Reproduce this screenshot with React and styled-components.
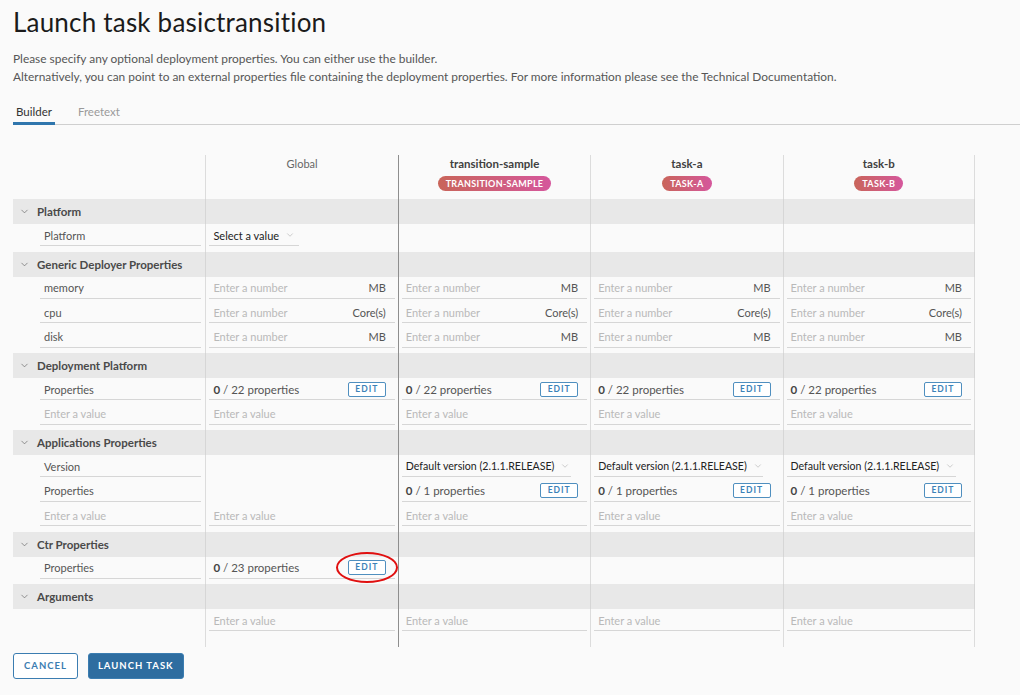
import React from "react";
import styled, { createGlobalStyle, css } from "styled-components";
import { ChevronDown } from "lucide-react";

const Global = createGlobalStyle`
  html, body { margin: 0; padding: 0; background: #fafafa; }
  body { font-family: Lato, "Open Sans", sans-serif; color: #454545; }
  * { box-sizing: border-box; }
`;

const Page = styled.div`
  padding: 6px 0 0 13px;
`;

const Title = styled.h1`
  margin: 0;
  font-size: 26px;
  line-height: 32px;
  font-weight: 400;
  color: #1b1b1b;
  letter-spacing: 0.2px;
`;

const Desc = styled.p`
  margin: 12px 0 0;
  font-size: 11.9px;
  line-height: 18px;
  color: #565656;
`;

const Tabs = styled.div`
  display: flex;
  gap: 20px;
  margin-top: 14px;
  border-bottom: 1px solid #cfcfcf;
  height: 25px;
`;

const Tab = styled.div`
  padding: 0 3px;
  font-size: 11.5px;
  color: ${(p) => (p.$active ? "#333" : "#9a9a9a")};
  border-bottom: 3px solid ${(p) => (p.$active ? "#2f76ad" : "transparent")};
  height: 25px;
  margin-bottom: -1px;
  display: flex;
  align-items: center;
`;

const Table = styled.div`
  margin-top: 30px;
  width: 962px;
`;

const Row = styled.div`
  display: grid;
  grid-template-columns: repeat(5, 1fr);
  height: ${(p) => p.$h}px;
  background: ${(p) => (p.$band ? "#e8e8e8" : "transparent")};
`;

const Cell = styled.div`
  display: flex;
  flex-direction: column;
  min-width: 0;
  border-left: 1px solid ${(p) => (p.$strong ? "#8e8e8e" : p.$band ? "#d6d6d6" : "#dcdcdc")};
  ${(p) => p.$first && css`border-left: none;`}
  &:last-child { border-right: 1px solid ${(p) => (p.$band ? "#d6d6d6" : "#dcdcdc")}; }
`;

const HeadCell = styled(Cell)`
  align-items: center;
  padding-top: 2px;
`;

const ColName = styled.div`
  font-size: ${(p) => (p.$app ? "11.5px" : "11px")};
  line-height: 14px;
  color: ${(p) => (p.$app ? "#404040" : "#666")};
  font-weight: ${(p) => (p.$app ? 700 : 400)};
`;

const Badge = styled.span`
  margin-top: 5px;
  height: 15px;
  padding: 0 8px;
  border-radius: 8px;
  background: linear-gradient(to right, #c9655a, #d5579c);
  color: #fff;
  font-size: 9px;
  font-weight: 700;
  letter-spacing: 0.3px;
  line-height: 15px;
`;

const BandTitle = styled.div`
  display: flex;
  align-items: center;
  height: 100%;
  padding-left: 6px;
  gap: 7px;
  font-size: 11.5px;
  font-weight: 700;
  color: #4a4a4a;
  white-space: nowrap;
`;

const Field = styled.div`
  height: 22px;
  margin: 0 ${(p) => (p.$label ? "4px 0 27px" : "3px 0 3px")};
  padding: 1px 9px 0 4px;
  border-bottom: 1px solid #d6d6d6;
  display: flex;
  align-items: center;
  justify-content: space-between;
  font-size: 11px;
  color: ${(p) => (p.$ph ? "#b9b9b9" : "#555")};
  white-space: nowrap;
`;

const Unit = styled.span`
  color: #555;
`;

const Count = styled.span`
  font-size: 11.5px;
  color: #555;
  b { font-weight: 700; color: #444; }
`;

const SelectBox = styled.div`
  height: 22px;
  margin-left: 3px;
  padding: 1px 0 0 4px;
  width: ${(p) => p.$w}px;
  border-bottom: 1px solid #d6d6d6;
  display: flex;
  align-items: center;
  gap: 6px;
  font-size: ${(p) => p.$fs}px;
  color: #222;
  white-space: nowrap;
  svg { flex-shrink: 0; }
`;

const EditWrap = styled.span`
  position: relative;
  display: inline-flex;
`;

const EditBtn = styled.button`
  width: 38px;
  height: 15px;
  padding: 0;
  border: 1px solid #4f8fbf;
  border-radius: 2px;
  background: #fff;
  color: #3c82b8;
  font-family: inherit;
  font-size: 8.5px;
  font-weight: 700;
  letter-spacing: 1px;
  line-height: 13px;
`;

const Ring = styled.span`
  position: absolute;
  left: -12px;
  top: -8px;
  width: 62px;
  height: 31px;
  border: 2px solid #e01010;
  border-radius: 50%;
  pointer-events: none;
`;

const Actions = styled.div`
  display: flex;
  gap: 10px;
  margin-top: 6px;
`;

const Button = styled.button`
  height: 26px;
  padding: 0 ${(p) => (p.$primary ? "9px" : "10px")};
  border: 1px solid #3b7db1;
  border-radius: 3px;
  background: ${(p) => (p.$primary ? "#2e6da0" : "#fff")};
  color: ${(p) => (p.$primary ? "#fff" : "#3b7db1")};
  font-family: inherit;
  font-size: 9.5px;
  font-weight: 700;
  letter-spacing: 1px;
`;

const ROW = 24.5;
const COLS = ["global", "transition-sample", "task-a", "task-b"];

function Band({ title }) {
  return (
    <Row $band $h={25}>
      <Cell $first $band>
        <BandTitle>
          <ChevronDown size={11} strokeWidth={1.5} color="#666" />
          {title}
        </BandTitle>
      </Cell>
      {COLS.map((c, i) => (
        <Cell key={c} $band $strong={i === 1} />
      ))}
    </Row>
  );
}

function Edit({ ring }) {
  return (
    <EditWrap>
      <EditBtn>EDIT</EditBtn>
      {ring && <Ring />}
    </EditWrap>
  );
}

function Content({ v }) {
  if (!v) return null;
  if (v.type === "num")
    return (
      <Field $ph>
        Enter a number<Unit>{v.unit}</Unit>
      </Field>
    );
  if (v.type === "val") return <Field $ph>Enter a value</Field>;
  if (v.type === "props")
    return (
      <Field>
        <Count>
          <b>0</b> / {v.n} properties
        </Count>
        <Edit ring={v.ring} />
      </Field>
    );
  if (v.type === "select")
    return (
      <SelectBox $w={v.w} $fs={v.fs}>
        {v.text}
        <ChevronDown size={10} strokeWidth={1.5} color="#b0b0b0" />
      </SelectBox>
    );
  return null;
}

function DataRow({ label, labelPh, cells, last, extra = 0 }) {
  return (
    <Row $h={ROW + (last ? 3 : 0) + extra}>
      <Cell $first>
        {label && <Field $label>{label}</Field>}
        {labelPh && (
          <Field $label $ph>
            Enter a value
          </Field>
        )}
      </Cell>
      {cells.map((v, i) => (
        <Cell key={i} $strong={i === 1}>
          <Content v={v} />
        </Cell>
      ))}
    </Row>
  );
}

const num = (unit) => ({ type: "num", unit });
const val = { type: "val" };
const props = (n, ring) => ({ type: "props", n, ring });
const ver = { type: "select", text: "Default version (2.1.1.RELEASE)", w: 169, fs: 10.6 };

export default function App() {
  return (
    <Page>
      <Global />
      <Title>Launch task basictransition</Title>
      <Desc>
        Please specify any optional deployment properties. You can either use the builder.
        <br />
        Alternatively, you can point to an external properties file containing the deployment
        properties. For more information please see the Technical Documentation.
      </Desc>
      <Tabs>
        <Tab $active>Builder</Tab>
        <Tab>Freetext</Tab>
      </Tabs>
      <Table>
        <Row $h={44}>
          <HeadCell $first />
          <HeadCell>
            <ColName>Global</ColName>
          </HeadCell>
          <HeadCell $strong>
            <ColName $app>transition-sample</ColName>
            <Badge>TRANSITION-SAMPLE</Badge>
          </HeadCell>
          <HeadCell>
            <ColName $app>task-a</ColName>
            <Badge>TASK-A</Badge>
          </HeadCell>
          <HeadCell>
            <ColName $app>task-b</ColName>
            <Badge>TASK-B</Badge>
          </HeadCell>
        </Row>

        <Band title="Platform" />
        <DataRow
          label="Platform"
          last
          cells={[{ type: "select", text: "Select a value", w: 90, fs: 11 }, null, null, null]}
        />

        <Band title="Generic Deployer Properties" />
        <DataRow label="memory" cells={[num("MB"), num("MB"), num("MB"), num("MB")]} />
        <DataRow label="cpu" cells={[num("Core(s)"), num("Core(s)"), num("Core(s)"), num("Core(s)")]} />
        <DataRow label="disk" last cells={[num("MB"), num("MB"), num("MB"), num("MB")]} />

        <Band title="Deployment Platform" />
        <DataRow label="Properties" cells={[props(22), props(22), props(22), props(22)]} />
        <DataRow labelPh last cells={[val, val, val, val]} />

        <Band title="Applications Properties" />
        <DataRow label="Version" cells={[null, ver, ver, ver]} />
        <DataRow label="Properties" cells={[null, props(1), props(1), props(1)]} />
        <DataRow labelPh last cells={[val, val, val, val]} />

        <Band title="Ctr Properties" />
        <DataRow label="Properties" last cells={[props(23, true), null, null, null]} />

        <Band title="Arguments" />
        <DataRow cells={[val, val, val, val]} extra={13} />
      </Table>
      <Actions>
        <Button>CANCEL</Button>
        <Button $primary>LAUNCH TASK</Button>
      </Actions>
    </Page>
  );
}
